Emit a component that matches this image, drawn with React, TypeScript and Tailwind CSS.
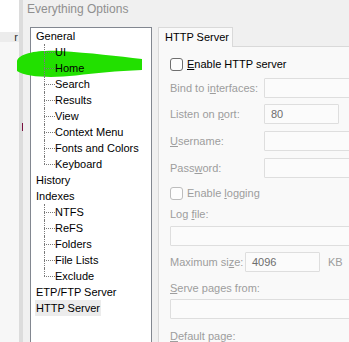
import React from 'react';

const FONT = { fontFamily: '"Liberation Sans", Arial, sans-serif' };

type Node = { label: string; children?: string[]; selected?: boolean };

const TREE: Node[] = [
  { label: 'General', children: ['UI', 'Home', 'Search', 'Results', 'View', 'Context Menu', 'Fonts and Colors', 'Keyboard'] },
  { label: 'History' },
  { label: 'Indexes', children: ['NTFS', 'ReFS', 'Folders', 'File Lists', 'Exclude'] },
  { label: 'ETP/FTP Server' },
  { label: 'HTTP Server', selected: true },
];

const ChildRow: React.FC<{ label: string; last: boolean }> = ({ label, last }) => (
  <div className="flex h-4 ml-[8px]">
    <div className="w-[11px] flex flex-col shrink-0">
      <div className="h-2 border-l border-dotted border-[#7a7a7a]" />
      <div className={`h-2 border-t border-dotted border-[#7a7a7a] ${last ? '' : 'border-l'}`} />
    </div>
    <span className="leading-4">{label}</span>
  </div>
);

const Field: React.FC<{ className?: string; value?: string }> = ({ className = '', value }) => (
  <div className={`h-[20px] border border-[#dedede] bg-[#fbfbfb] rounded-[1px] flex items-center pl-[6px] text-[#6d6d6d] ${className}`}>
    {value}
  </div>
);

const Check: React.FC<{ enabled?: boolean }> = ({ enabled }) => (
  <div className={`w-[13px] h-[13px] rounded-[3px] border bg-[#fdfdfd] shrink-0 ${enabled ? 'border-[#6f6f6f]' : 'border-[#bdbdbd]'}`} />
);

export default function App() {
  return (
    <div className="relative isolate w-[349px] h-[342px] overflow-hidden flex bg-white text-[11px] text-black" style={FONT}>
      {/* window behind */}
      <div className="w-[19px] shrink-0 flex flex-col bg-white">
        <div className="h-[32px]" />
        <div className="h-[10px] bg-[#ececec] flex justify-end items-center pr-[1px] text-[#333] leading-none overflow-hidden">r</div>
        <div className="flex-1 bg-[#f7f7f7]" />
      </div>
      <div className="w-[4px] shrink-0 bg-[#dcdcdc] flex flex-col">
        <div className="h-[123px]" />
        <div className="h-[8px] w-[2px] ml-[3px] bg-[#7a1040]" />
      </div>

      {/* dialog */}
      <div className="flex-1 bg-[#f0f0f0] flex flex-col min-w-0">
        <div className="h-[18px] flex items-center pl-[4px] text-[12px] text-[#8f8f8f] shrink-0">Everything Options</div>
        <div className="flex flex-1 pt-[9px] pl-[7px] gap-[6px] min-h-0">
          {/* tree */}
          <div className="w-[122px] shrink-0 border border-b-0 border-[#828790] bg-white">
            <div className="relative z-10 pl-[5px] flex flex-col">
              {TREE.map((n) => (
                <div key={n.label}>
                  <div className="h-4 leading-4 flex">
                    <span className={n.selected ? 'bg-[#ececec] px-[1px] -ml-[1px]' : ''}>{n.label}</span>
                  </div>
                  {n.children?.map((c, i) => (
                    <ChildRow key={c} label={c} last={i === n.children!.length - 1} />
                  ))}
                </div>
              ))}
            </div>
          </div>

          {/* tab control */}
          <div className="w-[260px] shrink-0 flex flex-col">
            <div className="flex h-[20px] shrink-0">
              <div className="w-[75px] border-t border-x border-[#d9d9d9] bg-[#f9f9f9] pl-[6px] flex items-center">HTTP Server</div>
              <div className="flex-1 border-b border-[#d9d9d9]" />
            </div>
            <div className="flex-1 border-l border-[#d9d9d9] bg-[#f9f9f9] pl-[11px] pt-[10px] flex flex-col text-[#9d9d9d]">
              <div className="h-[14px] flex items-center gap-[4px] text-black">
                <Check enabled />
                <span><u>E</u>nable HTTP server</span>
              </div>
              <div className="mt-[7px] flex items-center">
                <span className="w-[94px] shrink-0">Bind to i<u>n</u>terfaces:</span>
                <Field className="flex-1" />
              </div>
              <div className="mt-[6px] flex items-center">
                <span className="w-[94px] shrink-0">Listen on <u>p</u>ort:</span>
                <Field className="w-[75px]" value="80" />
              </div>
              <div className="mt-[7px] flex items-center">
                <span className="w-[94px] shrink-0"><u>U</u>sername:</span>
                <Field className="flex-1" />
              </div>
              <div className="mt-[7px] flex items-center">
                <span className="w-[94px] shrink-0">Pass<u>w</u>ord:</span>
                <Field className="flex-1" />
              </div>
              <div className="mt-[9px] h-[13px] flex items-center gap-[4px]">
                <Check />
                <span>Enable <u>l</u>ogging</span>
              </div>
              <div className="mt-[7px] h-[14px] flex items-center"><span>Log <u>f</u>ile:</span></div>
              <Field className="mt-[5px]" />
              <div className="mt-[6px] flex items-center">
                <span className="w-[75px] shrink-0">Maximum si<u>z</u>e:</span>
                <Field className="w-[75px]" value="4096" />
                <span className="ml-[8px]">KB</span>
              </div>
              <div className="mt-[9px] h-[14px] flex items-center"><span><u>S</u>erve pages from:</span></div>
              <Field className="mt-[4px]" />
              <div className="mt-[10px] h-[14px] flex items-center"><span><u>D</u>efault page:</span></div>
            </div>
          </div>
        </div>
      </div>

      {/* highlighter stroke */}
      <svg className="absolute left-0 top-0 z-[5] pointer-events-none" width="349" height="342" viewBox="0 0 349 342">
        <path
          d="M17,61 C19,53 38,50 60,51 C90,53 118,56 142,59 L142,70 C116,71 96,73 76,75.5 C52,78 27,77.5 17,71 Z"
          fill="#22e000"
        />
      </svg>
    </div>
  );
}
